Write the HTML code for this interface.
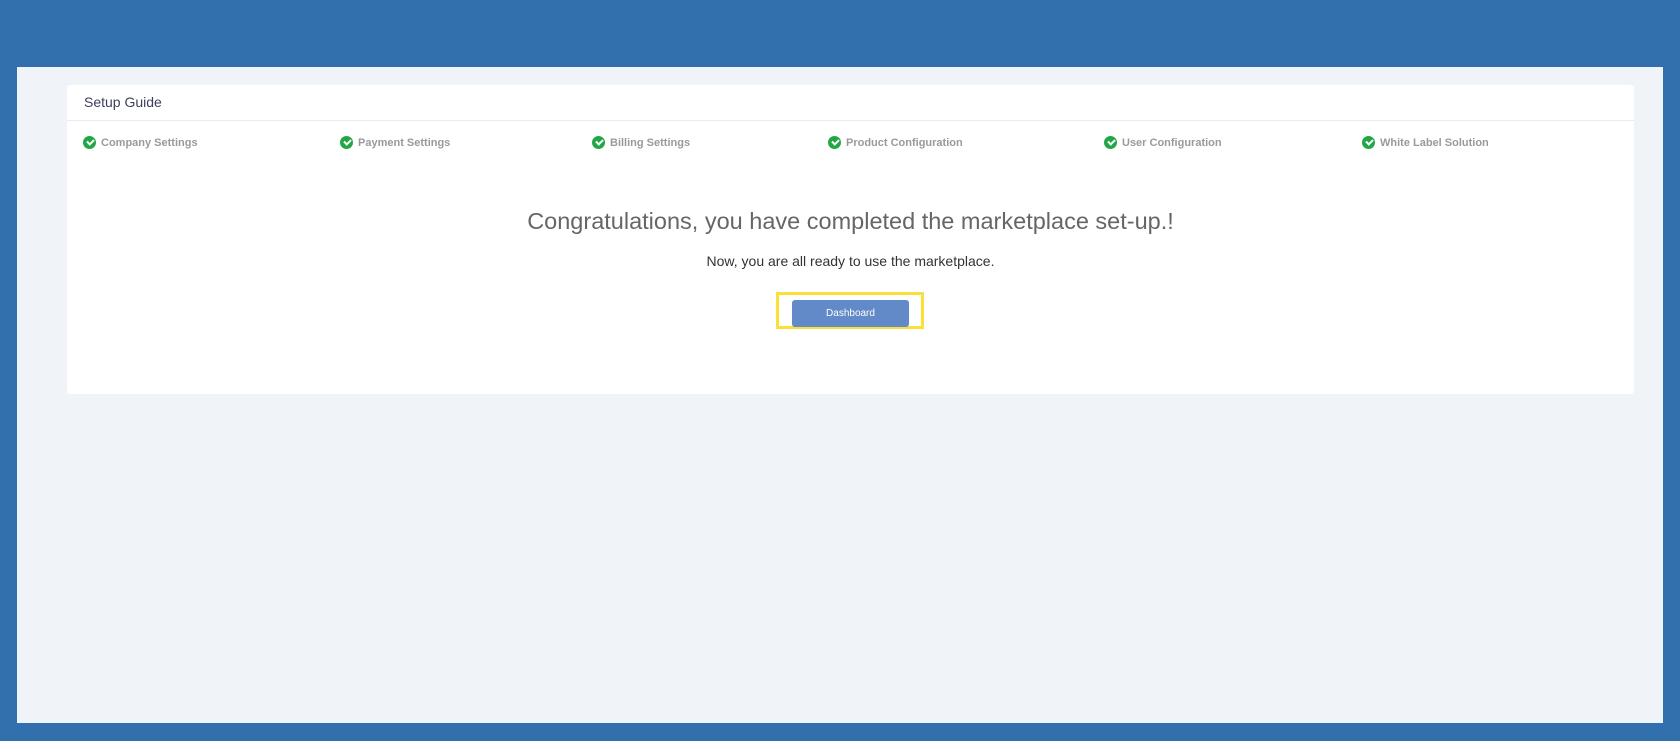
<!DOCTYPE html>
<html><head><style>
body{margin:0;width:1680px;height:741px;background:#3270ad;font-family:"Liberation Sans",sans-serif;position:relative;overflow:hidden}
.inner{position:absolute;left:17px;top:67px;width:1646px;height:656px;background:#f0f3f7}
.card{position:absolute;left:67px;top:85px;width:1567px;height:309px;background:#fff;border-radius:3px}
.hd{height:35px;border-bottom:1px solid #e8ecf1;font-size:14px;color:#3b3f5c;line-height:35px;padding-left:17px}
.step{position:absolute;top:51px;font-size:11px;color:#9a9a9a;font-weight:bold;display:flex;align-items:center;gap:5px}
.ck{width:13px;height:13px;border-radius:50%;background:#22a744;display:inline-block;position:relative}
.ck:after{content:"";position:absolute;left:3.5px;top:3px;width:5px;height:3px;border-left:2px solid #fff;border-bottom:2px solid #fff;transform:rotate(-45deg)}
.t1{position:absolute;top:123px;width:100%;text-align:center;font-size:23.5px;color:#666}
.t2{position:absolute;top:168px;width:100%;text-align:center;font-size:14px;color:#333}
.yb{position:absolute;left:709px;top:207px;width:148px;height:37px;border:3px solid #fddf3a;box-sizing:border-box}
.btn{position:absolute;left:725px;top:215px;width:117px;height:27px;background:#6289c8;border-radius:3px;color:#fff;font-size:10px;text-align:center;line-height:27px}
</style></head><body>
<div class="inner"></div>
<div class="card">
<div class="hd">Setup Guide</div>
<div class="step" style="left:16px"><span class="ck"></span>Company Settings</div>
<div class="step" style="left:273px"><span class="ck"></span>Payment Settings</div>
<div class="step" style="left:525px"><span class="ck"></span>Billing Settings</div>
<div class="step" style="left:761px"><span class="ck"></span>Product Configuration</div>
<div class="step" style="left:1037px"><span class="ck"></span>User Configuration</div>
<div class="step" style="left:1295px"><span class="ck"></span>White Label Solution</div>
<div class="t1">Congratulations, you have completed the marketplace set-up.!</div>
<div class="t2">Now, you are all ready to use the marketplace.</div>
<div class="yb"></div>
<div class="btn">Dashboard</div>
</div>
</body></html>
